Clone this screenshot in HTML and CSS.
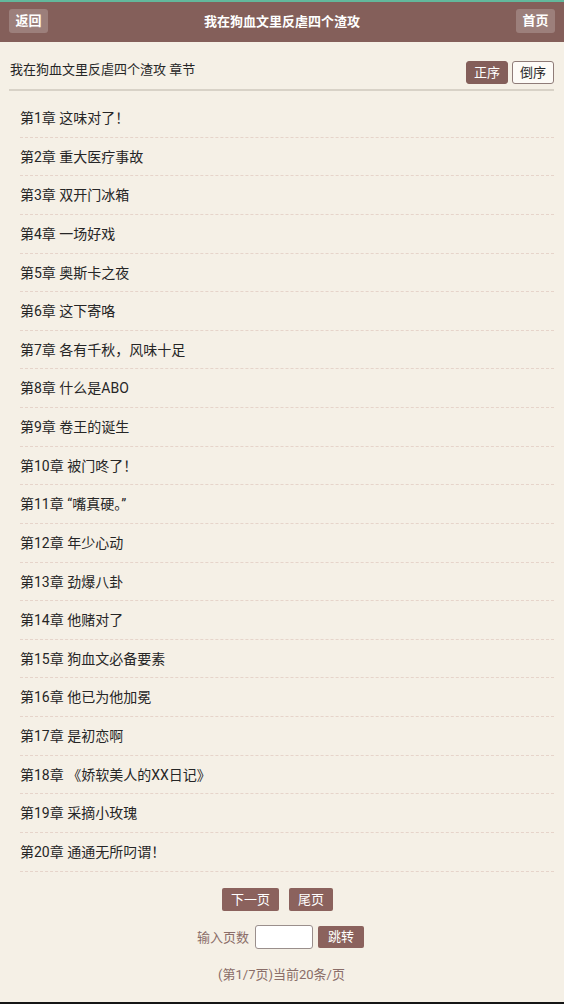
FILE: index.html
```html
<!DOCTYPE html>
<html lang="zh-CN">
<head>
    <meta charset="UTF-8">
    <meta name="viewport" content="width=device-width, initial-scale=1.0">
    <title>我在狗血文里反虐四个渣攻 章节</title>
    <link rel="stylesheet" href="styles.css">
</head>
<body>
    <div class="page">
        <header class="header">
            <a class="header-btn" href="#">返回</a>
            <div class="header-title">我在狗血文里反虐四个渣攻</div>
            <a class="header-btn" href="#">首页</a>
        </header>

        <div class="content">
            <div class="chapter-head">
                <span class="book-name">我在狗血文里反虐四个渣攻 章节</span>
                <div class="sort">
                    <a class="sort-btn active" href="#">正序</a>
                    <a class="sort-btn" href="#">倒序</a>
                </div>
            </div>

            <ul class="chapter-list">
                <li><a href="#">第1章 这味对了！</a></li>
                <li><a href="#">第2章 重大医疗事故</a></li>
                <li><a href="#">第3章 双开门冰箱</a></li>
                <li><a href="#">第4章 一场好戏</a></li>
                <li><a href="#">第5章 奥斯卡之夜</a></li>
                <li><a href="#">第6章 这下寄咯</a></li>
                <li><a href="#">第7章 各有千秋，风味十足</a></li>
                <li><a href="#">第8章 什么是ABO</a></li>
                <li><a href="#">第9章 卷王的诞生</a></li>
                <li><a href="#">第10章 被门咚了！</a></li>
                <li><a href="#">第11章 “嘴真硬。”</a></li>
                <li><a href="#">第12章 年少心动</a></li>
                <li><a href="#">第13章 劲爆八卦</a></li>
                <li><a href="#">第14章 他赌对了</a></li>
                <li><a href="#">第15章 狗血文必备要素</a></li>
                <li><a href="#">第16章 他已为他加冕</a></li>
                <li><a href="#">第17章 是初恋啊</a></li>
                <li><a href="#">第18章 《娇软美人的XX日记》</a></li>
                <li><a href="#">第19章 采摘小玫瑰</a></li>
                <li><a href="#">第20章 通通无所叼谓！</a></li>
            </ul>

            <div class="pager">
                <div class="pager-row nav">
                    <a class="pager-btn" href="#">下一页</a>
                    <a class="pager-btn" href="#">尾页</a>
                </div>
                <div class="pager-row jump">
                    <span class="jump-label">输入页数</span>
                    <input class="jump-input" type="text">
                    <a class="pager-btn" href="#">跳转</a>
                </div>
                <div class="pager-info">(第1/7页)当前20条/页</div>
            </div>
        </div>
    </div>
</body>
</html>
```

FILE: styles.css
```css
:root {
    --bg: #f5f0e6;
    --brand: #845f5a;
    --brand-btn: #8b625d;
    --text: #262626;
    --muted: #8a6d68;
    --line: #d8d2c7;
    --dash: #e6d4ca;
}

html {
    background-color: #151515;
}

body {
    margin: 0;
    font-family: Roboto, "Noto Sans CJK SC", sans-serif;
    font-size: 13px;
    color: var(--text);
}

a {
    text-decoration: none;
    color: inherit;
}

.page {
    background-color: var(--bg);
    min-height: calc(100vh - 2px);
}

.header {
    display: flex;
    align-items: center;
    height: 40px;
    padding: 0 9px;
    border-top: 2px solid #62b89c;
    background-color: var(--brand);
}

.header-btn {
    width: 39px;
    height: 24px;
    line-height: 23px;
    text-align: center;
    margin-top: -2px;
    border-radius: 3px;
    background-color: rgba(255, 255, 255, 0.2);
    color: #ffffff;
    font-weight: bold;
}

.header-title {
    flex: 1;
    text-align: center;
    color: #ffffff;
    font-weight: bold;
    margin-top: -3px;
}

.content {
    margin: 0 10px 0 9px;
}

.chapter-head {
    display: flex;
    justify-content: space-between;
    align-items: flex-end;
    height: 42px;
    padding: 0 0 5px 1px;
    border-bottom: 2px solid var(--line);
}

.book-name {
    line-height: 18px;
    margin-bottom: 5px;
}

.sort {
    display: flex;
    gap: 4px;
}

.sort-btn {
    height: 21px;
    line-height: 21px;
    padding: 0 7px;
    border: 1px solid #8f7c78;
    border-radius: 3px;
    background-color: #fdfbf7;
}

.sort-btn.active {
    background-color: var(--brand);
    border-color: var(--brand);
    color: #ffffff;
}

.chapter-list {
    list-style: none;
    margin: 0;
    padding: 8px 0 0;
}

.chapter-list li {
    margin: 0 0 0 11px;
    height: 37.63px;
    line-height: 38px;
    font-size: 14px;
    border-bottom: 1px dashed var(--dash);
}

.pager {
    padding-top: 16px;
    text-align: center;
}

.pager-row {
    display: flex;
    justify-content: center;
    align-items: center;
    gap: 10px;
}

.pager-row.nav {
    padding-right: 8px;
}

.pager-btn {
    height: 23px;
    line-height: 23px;
    padding: 0 9px;
    border-radius: 2px;
    background-color: var(--brand-btn);
    color: #ffffff;
}

.jump {
    margin-top: 14px;
    gap: 5px;
    padding-right: 2px;
}

.jump .pager-btn {
    height: 22px;
    line-height: 22px;
    padding: 0 10px;
}

.jump-label {
    color: var(--muted);
    margin-right: 1px;
}

.jump-input {
    box-sizing: border-box;
    width: 58px;
    height: 24px;
    border: 1px solid #9a8f8c;
    border-radius: 3px;
    background-color: #ffffff;
    padding: 0 4px;
}

.pager-info {
    margin-top: 17px;
    line-height: 18px;
    color: var(--muted);
}
```
